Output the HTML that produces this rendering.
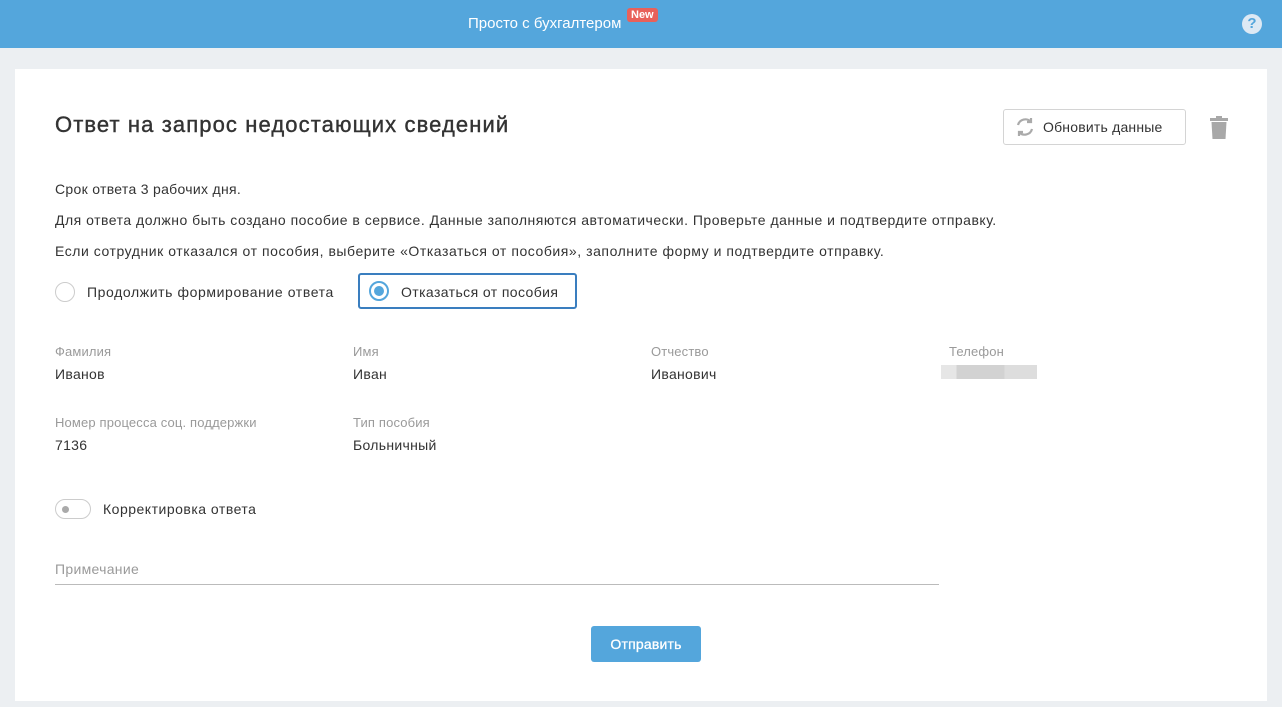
<!DOCTYPE html><html><head><meta charset="utf-8"><style>
*{box-sizing:border-box;margin:0;padding:0}
body{width:1282px;height:707px;background:#eceff2;font-family:"Liberation Sans",Roboto,sans-serif;color:#333;position:relative;overflow:hidden;font-size:14px;letter-spacing:0.3px}
.hdr{position:absolute;left:0;top:0;width:1282px;height:48px;background:#54a6dc;letter-spacing:0}
.a{position:absolute;white-space:nowrap}
.card{position:absolute;left:15px;top:69px;width:1252px;height:632px;background:#fff}
.lbl{color:#9a9a9a;font-size:13px;letter-spacing:0.15px}
.val{font-size:14px;color:#333}
.long{letter-spacing:0.6px}
</style></head><body>
<div class="hdr">
<div class="a" style="left:468px;top:15px;color:#fff;font-size:15px">Просто с бухгалтером</div>
<div class="a" style="left:627px;top:8px;background:#e8615a;color:#fff;font-size:11px;font-weight:bold;padding:1px 4px;border-radius:3px">New</div>
<div class="a" style="left:1242px;top:14px;width:20px;height:20px;border-radius:50%;background:#dde9f4;color:#54a6dc;font-weight:bold;font-size:15px;text-align:center;line-height:20px">?</div>
</div>
<div class="card"></div>
<div class="a" style="left:55px;top:112px;font-size:22px;color:#333;letter-spacing:1.1px;-webkit-text-stroke:0.4px #333">Ответ на запрос недостающих сведений</div>
<div class="a" style="left:1003px;top:109px;width:183px;height:36px;border:1px solid #d4d4d4;border-radius:3px"></div>
<svg class="a" style="left:1014px;top:116px" width="22" height="22" viewBox="0 0 22 22" fill="none" stroke="#aaa" stroke-width="2.2"><path d="M4 9a7.5 7.5 0 0 1 13-3"/><path d="M18 13a7.5 7.5 0 0 1-13 3"/><path d="M17 2v4h-4" /><path d="M5 20v-4h4"/></svg>
<div class="a" style="left:1043px;top:119px;font-size:14px;letter-spacing:0.2px">Обновить данные</div>
<svg class="a" style="left:1210px;top:116px" width="18" height="23" viewBox="0 0 18 23"><rect x="0" y="2" width="18" height="3" fill="#a8a8a8"/><rect x="6" y="0" width="6" height="3" fill="#a8a8a8"/><path d="M1.5 6h15l-1 17h-13z" fill="#a8a8a8"/></svg>
<div class="a" style="left:55px;top:181px">Срок ответа 3 рабочих дня.</div>
<div class="a long" style="left:55px;top:212px;letter-spacing:0.5px">Для ответа должно быть создано пособие в сервисе. Данные заполняются автоматически. Проверьте данные и подтвердите отправку.</div>
<div class="a long" style="left:55px;top:243px;letter-spacing:0.55px">Если сотрудник отказался от пособия, выберите «Отказаться от пособия», заполните форму и подтвердите отправку.</div>
<div class="a" style="left:55px;top:282px;width:20px;height:20px;border:1px solid #ccc;border-radius:50%"></div>
<div class="a" style="left:87px;top:284px;letter-spacing:0.6px">Продолжить формирование ответа</div>
<div class="a" style="left:358px;top:273px;width:219px;height:36px;border:2px solid #3a7ebf;border-radius:3px"></div>
<div class="a" style="left:369px;top:281px;width:20px;height:20px;border:2px solid #54a6dc;border-radius:50%"></div>
<div class="a" style="left:374px;top:286px;width:10px;height:10px;background:#54a6dc;border-radius:50%"></div>
<div class="a" style="left:401px;top:284px;letter-spacing:0.4px">Отказаться от пособия</div>
<div class="a lbl" style="left:55px;top:344px">Фамилия</div><div class="a val" style="left:55px;top:366px">Иванов</div>
<div class="a lbl" style="left:353px;top:344px">Имя</div><div class="a val" style="left:353px;top:366px">Иван</div>
<div class="a lbl" style="left:651px;top:344px">Отчество</div><div class="a val" style="left:651px;top:366px">Иванович</div>
<div class="a lbl" style="left:949px;top:344px">Телефон</div>
<div class="a" style="left:941px;top:365px;width:96px;height:14px;background:linear-gradient(90deg,#e6e6e6 0 16%,#d2d2d2 16% 66%,#dddddd 66%)"></div>
<div class="a lbl" style="left:55px;top:415px">Номер процесса соц. поддержки</div><div class="a val" style="left:55px;top:437px">7136</div>
<div class="a lbl" style="left:353px;top:415px">Тип пособия</div><div class="a val" style="left:353px;top:437px">Больничный</div>
<div class="a" style="left:55px;top:499px;width:36px;height:20px;border:1px solid #ccc;border-radius:10px"></div>
<div class="a" style="left:62px;top:506px;width:7px;height:7px;background:#aaa;border-radius:50%"></div>
<div class="a" style="left:103px;top:501px;letter-spacing:0.5px">Корректировка ответа</div>
<div class="a" style="left:55px;top:561px;color:#9a9a9a">Примечание</div>
<div class="a" style="left:55px;top:584px;width:884px;height:1px;background:#bbb"></div>
<div class="a" style="left:591px;top:626px;width:110px;height:36px;background:#54a6dc;border-radius:3px;color:#fff;text-align:center;line-height:36px;letter-spacing:0.2px;-webkit-text-stroke:0.3px #fff">Отправить</div>
</body></html>
